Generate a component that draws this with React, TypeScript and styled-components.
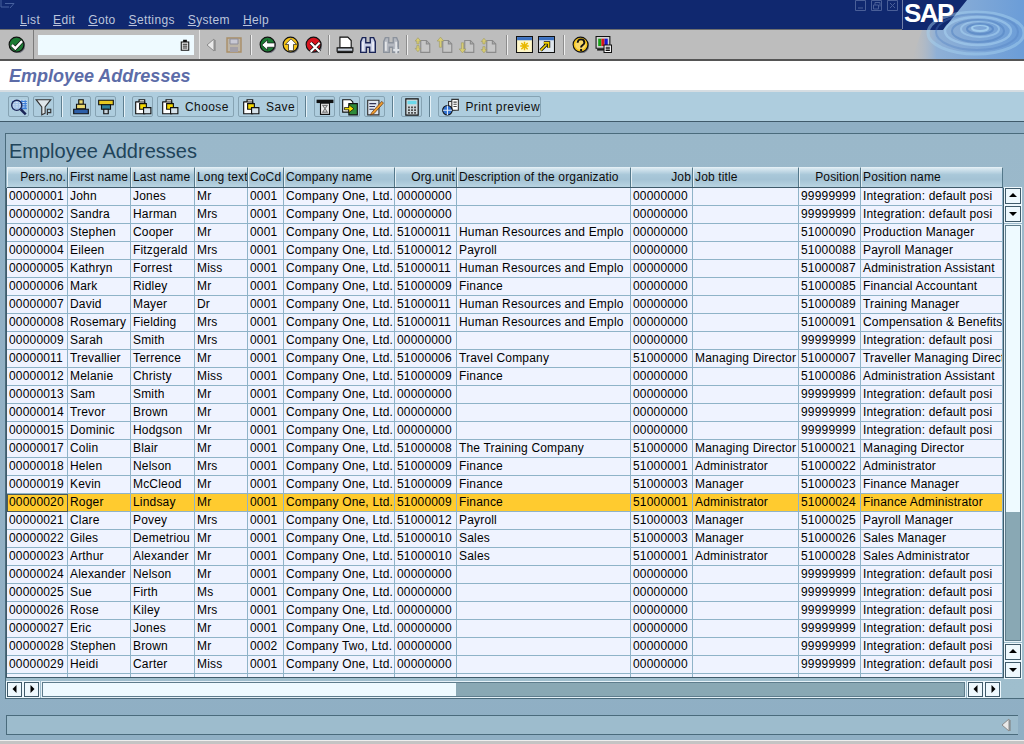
import React from "react";
import styled, { createGlobalStyle } from "styled-components";

const GlobalStyle = createGlobalStyle`
  html, body { margin: 0; padding: 0; background: #8fafc4; }
  body { font-family: "Liberation Sans", Arial, sans-serif; font-size: 12px; color: #000; }
`;

const Screen = styled.div`
  position: relative;
  width: 1024px;
  height: 744px;
  overflow: hidden;
  display: flex;
  flex-direction: column;
`;

const TitleBar = styled.div`
  position: relative;
  height: 29px;
  flex: none;
  background: #10286f;
`;

const WindowGlyph = styled.svg`
  position: absolute;
  left: 0;
  top: 0;
`;

const Menu = styled.nav`
  display: flex;
  padding: 13px 0 0 20px;
  gap: 13px;
  font-size: 12px;
  letter-spacing: 0.35px;
  line-height: 14px;
  color: #bcc5dc;
  u { text-underline-offset: 1px; }
`;

const WindowButtons = styled.div`
  position: absolute;
  left: 855px;
  top: 0;
  display: flex;
  gap: 5px;
`;

const LogoArea = styled.div`
  position: absolute;
  right: 0;
  top: 0;
  width: 122px;
  height: 59px;
  z-index: 2;
`;

const LogoRipple = styled.svg`
  position: absolute;
  inset: 0;
`;

const LogoText = styled.span`
  position: absolute;
  left: 2px;
  top: 0;
  font-size: 26px;
  line-height: 27px;
  font-weight: 700;
  letter-spacing: -1.6px;
  color: #fff;
`;

const SystemBar = styled.div`
  height: 29px;
  flex: none;
  display: flex;
  align-items: center;
  background: #bdbdbd;
  border-top: 1px solid #6f6f6f;
  border-bottom: 2px solid #555;
  box-sizing: content-box;
`;

const OkCell = styled.div`
  width: 33px;
  height: 29px;
  display: flex;
  align-items: center;
  justify-content: center;
  border-right: 1px solid #7a7a7a;
`;

const CommandCell = styled.div`
  width: 166px;
  height: 29px;
  display: flex;
  align-items: center;
  padding-left: 4px;
  box-sizing: border-box;
  border-right: 1px solid #e4e4e4;
  margin-right: 1px;
`;

const CommandField = styled.div`
  width: 156px;
  height: 20px;
  background: #eefaff;
  display: flex;
  align-items: center;
  justify-content: flex-end;
  padding-right: 3px;
  box-sizing: border-box;
`;

const Slot = styled.span<{ $w?: number }>`
  width: ${(p) => p.$w ?? 22}px;
  height: 22px;
  flex: none;
  display: flex;
  align-items: center;
  justify-content: center;
`;

const BarSep = styled.i<{ $space?: number }>`
  width: 2px;
  height: 20px;
  flex: none;
  margin: 0 ${(p) => (p.$space ?? 9) / 2}px;
  background: linear-gradient(90deg, #8d8d8d 50%, #eee 50%);
`;

const TitleArea = styled.div`
  height: 29px;
  flex: none;
  background: #fff;
  border-bottom: 2px solid #d6dde2;
  box-sizing: content-box;
  padding-left: 9px;
`;

const PageTitle = styled.h1`
  margin: 0;
  font-size: 18px;
  line-height: 30px;
  font-weight: 700;
  font-style: italic;
  color: #5c6ca8;
`;

const AppBar = styled.div`
  height: 29px;
  flex: none;
  display: flex;
  align-items: center;
  gap: 4px;
  padding-left: 8px;
  background: #aecdde;
  border-bottom: 1px solid #3f5a6a;
`;

const ToolButton = styled.div<{ $w?: number }>`
  width: ${(p) => p.$w ?? 21}px;
  height: 21px;
  flex: none;
  box-sizing: border-box;
  display: flex;
  align-items: center;
  justify-content: ${(p) => (p.$w ? "flex-start" : "center")};
  gap: 6px;
  padding: ${(p) => (p.$w ? "0 0 0 3px" : "0")};
  border: 1px solid #86a3b3;
  border-radius: 2px;
  white-space: nowrap;
  letter-spacing: 0.4px;
  color: #111;
`;

const ToolSep = styled.i`
  width: 2px;
  height: 21px;
  flex: none;
  margin: 0 3px;
  background: linear-gradient(90deg, #5f7f90 50%, #e6f2f8 50%);
`;

const Workspace = styled.div`
  flex: 1;
  display: flex;
  flex-direction: column;
  padding: 11px 0 0 5px;
  background: linear-gradient(#8fafc4, #93b1c5 60%, #8fafc4);
`;

const Panel = styled.section`
  height: 566px;
  flex: none;
  box-sizing: border-box;
  border: 1px solid #4a6b7c;
  border-right: 0;
  background: linear-gradient(#9ab8ca, #9fbecd);
`;

const PanelTitle = styled.h2`
  margin: 0;
  height: 33px;
  padding-left: 3px;
  font-size: 20px;
  line-height: 34px;
  font-weight: 400;
  color: #21445a;
`;

const TableRow = styled.div`
  display: flex;
  height: 510px;
`;

const TableWrap = styled.div`
  width: 997px;
  flex: none;
`;

const columns = "61px 63px 64px 53px 36px 111px 62px 174px 62px 106px 62px 142px";

const HeaderRow = styled.div`
  display: grid;
  grid-template-columns: ${columns};
  height: 21px;
  margin-left: 1px;
  box-sizing: border-box;
  border-bottom: 1px solid #3f5a6a;
`;

const HeadCell = styled.div<{ $right?: boolean }>`
  box-sizing: border-box;
  overflow: hidden;
  white-space: nowrap;
  height: 20px;
  padding: 0 1px;
  line-height: 19px;
  letter-spacing: 0.14px;
  text-align: ${(p) => (p.$right ? "right" : "left")};
  color: #0c0c0c;
  background: linear-gradient(#dbeaf2, #a9c8d9 35%, #a4c3d5 60%, #b9d4e2);
  border-top: 1px solid #e3eff5;
  border-left: 1px solid #e3eff5;
  border-right: 1px solid #54788a;
`;

const Body = styled.div`
  height: 489px;
  overflow: hidden;
  box-sizing: content-box;
  border-left: 1px solid #3f5a6a;
  border-right: 1px solid #3f5a6a;
  border-bottom: 1px solid #3f5a6a;
  width: 996px;
`;

const DataRow = styled.div<{ $selected?: boolean }>`
  display: grid;
  grid-template-columns: ${columns};
  height: 18px;
  background: ${(p) => (p.$selected ? "#ffcb2f" : "#eff3ff")};
`;

const Cell = styled.div<{ $focus?: boolean }>`
  box-sizing: border-box;
  overflow: hidden;
  white-space: nowrap;
  padding: 0 0 0 2px;
  line-height: 17px;
  letter-spacing: 0.18px;
  border-right: 1px solid #8fb3c8;
  border-bottom: 1px solid #8fb3c8;
  outline: ${(p) => (p.$focus ? "1px solid #4d5a5a" : "none")};
  outline-offset: -1px;
`;

const VScroll = styled.div`
  width: 16px;
  flex: none;
  margin: 21px 0 0 2px;
  display: flex;
  flex-direction: column;
  gap: 2px;
`;

const ScrollBtn = styled.div<{ $w?: number; $h?: number }>`
  width: ${(p) => p.$w ?? 16}px;
  height: ${(p) => p.$h ?? 16}px;
  flex: none;
  box-sizing: border-box;
  display: flex;
  align-items: center;
  justify-content: center;
  background: #eef8fd;
  border: 1px solid #3f5a6a;
  outline: 1px solid #eef8fd;
  outline-offset: 0;
`;

const VTrack = styled.div`
  width: 16px;
  height: 416px;
  flex: none;
  margin: 1px 0;
  box-sizing: border-box;
  border: 1px solid #5d7c8c;
  outline: 1px solid #e6f2f8;
  display: flex;
  flex-direction: column;
`;

const TrackPart = styled.div<{ $thumb?: boolean; $size?: number }>`
  ${(p) => (p.$size ? `flex: 0 0 ${p.$size}px;` : "flex: 1;")}
  background: ${(p) => (p.$thumb ? "#89a8b4" : "#eefaff")};
`;

const HScroll = styled.div`
  display: flex;
  align-items: center;
  gap: 2px;
  margin: 3px 0 0 1px;
  height: 16px;
  width: 994px;
`;

const HTrack = styled.div`
  width: 923px;
  height: 15px;
  flex: none;
  margin: 0 1px;
  box-sizing: border-box;
  border: 1px solid #5d7c8c;
  outline: 1px solid #e6f2f8;
  display: flex;
`;

const StatusBar = styled.div`
  height: 20px;
  width: 1012px;
  flex: none;
  margin: 16px 0 0 1px;
  box-sizing: border-box;
  border: 1px solid #4a6b7c;
  border-right: 0;
  background: #9dbccd;
  display: flex;
  align-items: center;
  justify-content: flex-end;
  padding-right: 3px;
`;

const BottomEdge = styled.div`
  height: 3px;
  flex: none;
  background: #c4c4c4;
  border-top: 1px solid #eee;
`;

/* ---- drawings ---- */

const Svg = ({ size = 16, children }: { size?: number; children: React.ReactNode }) => (
  <svg width={size} height={size} viewBox="0 0 16 16" aria-hidden="true">
    {children}
  </svg>
);

const Round = ({ fill, children }: { fill: string; children: React.ReactNode }) => (
  <Svg size={18}>
    <circle cx="8.6" cy="8.6" r="6.6" fill="#6c6f7a" />
    <circle cx="7.6" cy="7.6" r="6.6" fill={fill} stroke="#111" strokeWidth="1" />
    {children}
  </Svg>
);

const Check = () => (
  <Round fill="#1c7a34">
    <path d="M3.5 8 6.5 11 12.5 4.5" fill="none" stroke="#111" strokeWidth="3.4" />
    <path d="M3.5 8 6.5 11 12.5 4.5" fill="none" stroke="#fff" strokeWidth="2.2" />
  </Round>
);
const Back = () => (
  <Round fill="#1c7a34">
    <path d="M2.5 8 7.5 3.5V6.2H14V10H7.5V12.5Z" fill="#fff" stroke="#111" strokeWidth=".6" />
  </Round>
);
const Up = () => (
  <Round fill="#f6c417">
    <path d="M8 2.5 13 7.5H10.2V13H5.8V7.5H3Z" fill="#fff" stroke="#111" strokeWidth=".6" />
  </Round>
);
const Cancel = () => (
  <Round fill="#d8141f">
    <path d="M5 6 13 14M13 6 5 14" stroke="#111" strokeWidth="3.2" />
    <path d="M5 6 13 14M13 6 5 14" stroke="#fff" strokeWidth="2" />
  </Round>
);
const Help = () => (
  <Round fill="#f6c417">
    <circle cx="7.6" cy="7.6" r="4.8" fill="#fff" opacity=".35" />
    <path d="M5 6c0-4 6-4 6 0 0 2-3 2-3 4.2" fill="none" stroke="#111" strokeWidth="1.7" />
    <path d="M7.2 11.5h1.8v2H7.2z" fill="#111" />
  </Round>
);

const DocSmall = () => (
  <Svg size={12}>
    <path d="M3 4h10v11H3z" fill="#eee" stroke="#111" strokeWidth="1.4" />
    <path d="M5.5 1h5v3h-5z" fill="#111" />
    <path d="M5 7h6M5 9.5h6M5 12h6" stroke="#111" strokeWidth="1.2" />
  </Svg>
);
const BackGray = () => (
  <Svg>
    <path d="M10 2 3 8l7 6z" fill="#e9e9e9" stroke="#8b8b8b" />
    <path d="M11 3v11" stroke="#7c7c7c" />
  </Svg>
);
const SaveOff = () => (
  <Svg size={16}>
    <path d="M1 1h14v14H1z" fill="#bdb5a8" stroke="#a98e67" strokeWidth="1.4" />
    <path d="M4 2h8v5H4z" fill="#c8c8d4" stroke="#8e8e9a" />
    <path d="M4 10h8v5H4z" fill="#a4a0a8" />
  </Svg>
);
const Print = () => (
  <Svg size={18}>
    <path d="M3.5 1h7l3 3v6.5h-10z" fill="#fff" stroke="#111" />
    <path d="M1 10.5h14v3H1z" fill="#c8d0dc" stroke="#111" />
    <path d="M1 14.5h14" stroke="#111" strokeWidth="1.4" />
  </Svg>
);
const Binocular = ({ off }: { off?: boolean }) => {
  const c = off ? "#8b929c" : "#1a2456";
  const f = off ? "#b4b8c0" : "#c8cfe6";
  return (
    <Svg size={18}>
      <path d="M1.5 5 3 1.5h3V6h4V1.5h3L14.5 5v9.5h-5V10h-3v4.5h-5z" fill={f} stroke={c} strokeWidth="1.2" />
      <path d="M3.5 5v8M12.5 5v8" stroke="#fff" />
      {off && <path d="M10 12.5h5.5M12.7 10v5.5" stroke="#dfe3e8" strokeWidth="1.8" />}
    </Svg>
  );
};
const PageNav = ({ kind }: { kind: "first" | "prev" | "next" | "last" }) => (
  <Svg size={18}>
    <path d="M6 4h5l3 3v7.5H6z" fill="#c6c6c6" stroke="#8b8b8b" />
    <path d="M11 4v3h3" fill="none" stroke="#8b8b8b" />
    {kind === "first" && <path d="M3.5 1.5 6 4.5H4.5V7h-2V4.5H1zM3.5 14 1 11h1.5V8.5h2V11H6z" fill="#d8cc72" stroke="#9a9560" strokeWidth=".5" />}
    {kind === "prev" && <path d="M4 1 7 4.5H5V10H3V4.5H1z" fill="#d8cc72" stroke="#9a9560" strokeWidth=".5" />}
    {kind === "next" && <path d="M4 15 1 11.5h2V6h2v5.5h2z" fill="#d8cc72" stroke="#9a9560" strokeWidth=".5" />}
    {kind === "last" && <path d="M3.5 2 6 5H4.5v2h-2V5H1zM3.5 15 1 12h1.5V9.5h2V12H6z" fill="#d8cc72" stroke="#9a9560" strokeWidth=".5" />}
  </Svg>
);
const NewSession = () => (
  <Svg size={17}>
    <path d="M.5.5h15v15H.5z" fill="#fff7c8" stroke="#111" />
    <path d="M1 1h14v3H1z" fill="#3a6fc0" />
    <path d="M8 5.5v8M4 9.5h8M5 6.5l6 6M11 6.5l-6 6" stroke="#e8b800" strokeWidth="1.4" />
  </Svg>
);
const Shortcut = () => (
  <Svg size={17}>
    <path d="M.5.5h15v15H.5z" fill="#dfe6ec" stroke="#111" />
    <path d="M1 1h14v3H1z" fill="#3a6fc0" />
    <path d="M2.5 13.5 8 8M5.5 6.5h4.5v4.5" fill="none" stroke="#111" strokeWidth="3" />
    <path d="M2.5 13.5 8 8M5.5 6.5h4.5v4.5" fill="none" stroke="#f4d400" strokeWidth="1.5" />
  </Svg>
);
const Layout = () => (
  <Svg size={17}>
    <path d="M1 .5h13v11H1z" fill="#d6d6d6" stroke="#111" />
    <path d="M3 2.5h3v7H3z" fill="#18a018" />
    <path d="M6 2.5h3v7H6z" fill="#d81818" />
    <path d="M9 2.5h3v7H9z" fill="#1818d0" />
    <path d="M2 13h7" stroke="#111" strokeWidth="1.4" />
    <path d="M8.5 8.5h7v7h-7z" fill="#fff" stroke="#111" />
    <path d="M10 10.5h4M10 12h4M10 13.5h4" stroke="#111" />
  </Svg>
);
const Details = () => (
  <Svg size={18}>
    <path d="M2 2h13v8H2z" fill="#3d7ed8" />
    <path d="M2 2h13M2 4h13M2 6h13M2 8h13" stroke="#dce9f5" strokeDasharray="2 1" />
    <circle cx="6" cy="6.5" r="4.5" fill="#cfe0f0" fillOpacity=".7" stroke="#1a2456" strokeWidth="1.2" />
    <path d="M9.5 10 14 14.5" stroke="#1a2456" strokeWidth="2.2" />
  </Svg>
);
const Filter = () => (
  <Svg size={18}>
    <path d="M1 1.5h13L9 8v5.5l-3 1.5V8z" fill="#dfe6ea" stroke="#333" />
    <path d="M11 10h3v3h-3zM11 10v5" fill="none" stroke="#333" />
  </Svg>
);
const SortAsc = () => (
  <Svg size={18}>
    <path d="M6 1.5h4v4H6z" fill="#e8d870" stroke="#111" />
    <path d="M4 5.5h8v4H4z" fill="#e8d870" stroke="#111" />
    <path d="M1.5 10h13v4h-13z" fill="#2d5fa8" stroke="#111" />
  </Svg>
);
const SortDesc = () => (
  <Svg size={18}>
    <path d="M1.5 2h13v4h-13z" fill="#e8c820" stroke="#111" />
    <path d="M4 6h8v4H4z" fill="#2d7f9a" stroke="#111" />
    <path d="M6 10h4v4H6z" fill="#c8d4dc" stroke="#111" />
  </Svg>
);
const Choose = () => (
  <Svg size={18}>
    <path d="M1.5 3.5h3v-2h5v3h-1" fill="#fff" stroke="#111" />
    <path d="M1.5 3.5h8V14h-8z" fill="#fff" stroke="#111" />
    <path d="M5 5h6v5H5z" fill="#f4d800" stroke="#111" />
    <path d="M8.5 8.5h6.5v5.5H8.5z" fill="#d6e2ea" stroke="#111" />
  </Svg>
);
const Sum = () => (
  <Svg size={18}>
    <path d="M.5 1.5h15v3h-15z" fill="#111" />
    <path d="M4 4.5h8v10H4z" fill="#eee" stroke="#111" />
    <path d="M6 6.5h4L6 12.5h4z" fill="none" stroke="#777" />
  </Svg>
);
const Export = () => (
  <Svg size={18}>
    <path d="M1.5 1.5h7l2 2v9h-9z" fill="#fff" stroke="#111" />
    <path d="M7 5h7.5v10H7z" fill="#2e8b3a" stroke="#111" />
    <path d="M3 8.5h4V6l4.5 3.5L7 13v-2.5H3z" fill="#f4e000" stroke="#111" strokeWidth=".7" />
  </Svg>
);
const Edit = () => (
  <Svg size={18}>
    <path d="M1.5 2h10v13h-10z" fill="#dfe6f0" stroke="#333" />
    <path d="M3 5h6M3 7.5h5M3 10h4" stroke="#335" />
    <path d="M5 13 14 3l1.5 1.5L7 14l-3 1z" fill="#f2a030" stroke="#6b3a10" strokeWidth=".7" />
  </Svg>
);
const Calculator = () => (
  <Svg size={18}>
    <path d="M2.5 .8h11v14.4h-11z" fill="#cfd8dc" stroke="#111" />
    <path d="M4 2.5h8v3H4z" fill="#6cd8ea" />
    <path d="M4.5 7.5h1.6v1.6H4.5zM7.2 7.5h1.6v1.6H7.2zM9.9 7.5h1.6v1.6H9.9zM4.5 10h1.6v1.6H4.5zM7.2 10h1.6v1.6H7.2zM9.9 10h1.6v1.6H9.9zM4.5 12.5h1.6v1.6H4.5zM7.2 12.5h1.6v1.6H7.2zM9.9 12.5h1.6v1.6H9.9z" fill="#444" />
  </Svg>
);
const Preview = () => (
  <Svg size={18}>
    <path d="M6 3h6v8H6z" fill="#eee" stroke="#333" />
    <path d="M9 1h6v10H9z" fill="#fff" stroke="#333" />
    <path d="M10.5 3.5h3M10.5 5.5h3M10.5 7.5h3" stroke="#444" />
    <circle cx="5" cy="11" r="4.4" fill="#2f6fd0" stroke="#111" />
    <path d="M5 6.6v8.8M.8 11h8.4" stroke="#dce9f5" />
  </Svg>
);
const Arrow = ({ dir }: { dir: "up" | "down" | "left" | "right" }) => {
  const d = {
    up: "M1 6 5 2l4 4z",
    down: "M1 3h8L5 7z",
    left: "M6.5 1v8L2.5 5z",
    right: "M3.5 1v8l4-4z",
  }[dir];
  return (
    <svg width="10" height="10" viewBox="0 0 10 10" aria-hidden="true">
      <path d={d} fill="#000" />
    </svg>
  );
};

const SapRipple = () => (
  <LogoRipple width="122" height="59" viewBox="0 0 122 59">
    <defs>
      <linearGradient id="fade" x1="0" x2="1" y1="0" y2="0">
        <stop offset="0" stopColor="#b5bcc6" stopOpacity="0" />
        <stop offset=".22" stopColor="#8fb0d6" />
        <stop offset="1" stopColor="#6b9dd8" />
      </linearGradient>
    </defs>
    <path d="M0 0h65L41 30H0z" fill="#10286f" />
    <path d="M0 0v29" stroke="#cfd6e2" />
    <path d="M65 0h57v59H10L20 30h21z" fill="url(#fade)" />
    <g fill="none" stroke="#a9d4f2">
      <ellipse cx="78" cy="28" rx="8" ry="3" strokeWidth="2" opacity=".8" />
      <ellipse cx="78" cy="29" rx="19" ry="8" strokeWidth="2" opacity=".55" />
      <ellipse cx="76" cy="31" rx="33" ry="14" strokeWidth="2.5" opacity=".55" />
      <ellipse cx="74" cy="33" rx="48" ry="21" strokeWidth="3" opacity=".45" />
    </g>
    <g fill="none" stroke="#4f7fbf">
      <ellipse cx="78" cy="29" rx="13" ry="5" strokeWidth="2" opacity=".6" />
      <ellipse cx="76" cy="31" rx="26" ry="11" strokeWidth="2" opacity=".5" />
      <ellipse cx="75" cy="32" rx="41" ry="18" strokeWidth="2" opacity=".35" />
    </g>
  </LogoRipple>
);

const WindowBox = ({ children }: { children: React.ReactNode }) => (
  <svg width="11" height="11" viewBox="0 0 11 11" fill="none" stroke="#4a5f98" aria-hidden="true">
    <path d="M.5.5h10v10H.5z" />
    {children}
  </svg>
);

/* ---- data ---- */

const one = "Company One, Ltd.";
const empty = "00000000";
const integ = "Integration: default posi";
const hr = "Human Resources and Emplo";

const headers: [string, boolean][] = [
  ["Pers.no.", true],
  ["First name", false],
  ["Last name", false],
  ["Long text", false],
  ["CoCd", false],
  ["Company name", false],
  ["Org.unit", true],
  ["Description of the organizatio", false],
  ["Job", true],
  ["Job title", false],
  ["Position", true],
  ["Position name", false],
];

const row = (
  no: string,
  first: string,
  last: string,
  title: string,
  org = empty,
  desc = "",
  job = empty,
  jobTitle = "",
  pos = "99999999",
  posName = integ,
  code = "0001",
  company = one,
) => ["000000" + no, first, last, title, code, company, org, desc, job, jobTitle, pos, posName];

const m1 = "51000001";
const m3 = "51000003";

const rows = [
  row("01", "John", "Jones", "Mr"),
  row("02", "Sandra", "Harman", "Mrs"),
  row("03", "Stephen", "Cooper", "Mr", "51000011", hr, empty, "", "51000090", "Production Manager"),
  row("04", "Eileen", "Fitzgerald", "Mrs", "51000012", "Payroll", empty, "", "51000088", "Payroll Manager"),
  row("05", "Kathryn", "Forrest", "Miss", "51000011", hr, empty, "", "51000087", "Administration Assistant"),
  row("06", "Mark", "Ridley", "Mr", "51000009", "Finance", empty, "", "51000085", "Financial Accountant"),
  row("07", "David", "Mayer", "Dr", "51000011", hr, empty, "", "51000089", "Training Manager"),
  row("08", "Rosemary", "Fielding", "Mrs", "51000011", hr, empty, "", "51000091", "Compensation & Benefits"),
  row("09", "Sarah", "Smith", "Mrs"),
  row("11", "Trevallier", "Terrence", "Mr", "51000006", "Travel Company", "51000000", "Managing Director", "51000007", "Traveller Managing Direct"),
  row("12", "Melanie", "Christy", "Miss", "51000009", "Finance", empty, "", "51000086", "Administration Assistant"),
  row("13", "Sam", "Smith", "Mr"),
  row("14", "Trevor", "Brown", "Mr"),
  row("15", "Dominic", "Hodgson", "Mr"),
  row("17", "Colin", "Blair", "Mr", "51000008", "The Training Company", "51000000", "Managing Director", "51000021", "Managing Director"),
  row("18", "Helen", "Nelson", "Mrs", "51000009", "Finance", m1, "Administrator", "51000022", "Administrator"),
  row("19", "Kevin", "McCleod", "Mr", "51000009", "Finance", m3, "Manager", "51000023", "Finance Manager"),
  row("20", "Roger", "Lindsay", "Mr", "51000009", "Finance", m1, "Administrator", "51000024", "Finance Administrator"),
  row("21", "Clare", "Povey", "Mrs", "51000012", "Payroll", m3, "Manager", "51000025", "Payroll Manager"),
  row("22", "Giles", "Demetriou", "Mr", "51000010", "Sales", m3, "Manager", "51000026", "Sales Manager"),
  row("23", "Arthur", "Alexander", "Mr", "51000010", "Sales", m1, "Administrator", "51000028", "Sales Administrator"),
  row("24", "Alexander", "Nelson", "Mr"),
  row("25", "Sue", "Firth", "Ms"),
  row("26", "Rose", "Kiley", "Mrs"),
  row("27", "Eric", "Jones", "Mr"),
  row("28", "Stephen", "Brown", "Mr", empty, "", empty, "", "99999999", integ, "0002", "Company Two, Ltd."),
  row("29", "Heidi", "Carter", "Miss"),
  Array(12).fill(""),
];

const menuItems: [string, string][] = [
  ["L", "ist"],
  ["E", "dit"],
  ["G", "oto"],
  ["S", "ettings"],
  ["S", "ystem"],
  ["H", "elp"],
];

export default function App() {
  return (
    <Screen>
      <GlobalStyle />
      <TitleBar>
        <WindowGlyph width="16" height="10" viewBox="0 0 16 10" fill="none" stroke="#47619f" aria-hidden="true">
          <path d="M1 0v7h8M1 0M5 3.5h9L10 8" />
        </WindowGlyph>
        <Menu>
          {menuItems.map(([first, rest]) => (
            <span key={first + rest}>
              <u>{first}</u>
              {rest}
            </span>
          ))}
        </Menu>
        <WindowButtons>
          <WindowBox>
            <path d="M3 8h5" />
          </WindowBox>
          <WindowBox>
            <path d="M2.5 5h5v4h-5zM4 5V2.5h5v4" />
          </WindowBox>
          <WindowBox>
            <path d="M3 3l5 5M8 3 3 8" />
          </WindowBox>
        </WindowButtons>
      </TitleBar>
      <LogoArea>
        <SapRipple />
        <LogoText>SAP</LogoText>
      </LogoArea>

      <SystemBar>
        <OkCell>
          <Check />
        </OkCell>
        <CommandCell>
          <CommandField>
            <DocSmall />
          </CommandField>
        </CommandCell>
        <Slot><BackGray /></Slot>
        <Slot><SaveOff /></Slot>
        <BarSep />
        <Slot $w={23}><Back /></Slot>
        <Slot $w={23}><Up /></Slot>
        <Slot $w={23}><Cancel /></Slot>
        <BarSep $space={6} />
        <Slot $w={23}><Print /></Slot>
        <Slot $w={23}><Binocular /></Slot>
        <Slot $w={23}><Binocular off /></Slot>
        <BarSep $space={8} />
        <Slot><PageNav kind="first" /></Slot>
        <Slot><PageNav kind="prev" /></Slot>
        <Slot><PageNav kind="next" /></Slot>
        <Slot><PageNav kind="last" /></Slot>
        <BarSep $space={11} />
        <Slot><NewSession /></Slot>
        <Slot><Shortcut /></Slot>
        <BarSep $space={11} />
        <Slot><Help /></Slot>
        <Slot><Layout /></Slot>
      </SystemBar>

      <TitleArea>
        <PageTitle>Employee Addresses</PageTitle>
      </TitleArea>

      <AppBar>
        <ToolButton><Details /></ToolButton>
        <ToolButton><Filter /></ToolButton>
        <ToolSep />
        <ToolButton><SortAsc /></ToolButton>
        <ToolButton><SortDesc /></ToolButton>
        <ToolSep />
        <ToolButton><Choose /></ToolButton>
        <ToolButton $w={77}><Choose />Choose</ToolButton>
        <ToolButton $w={60}><Choose />Save</ToolButton>
        <ToolSep />
        <ToolButton><Sum /></ToolButton>
        <ToolButton><Export /></ToolButton>
        <ToolButton><Edit /></ToolButton>
        <ToolSep />
        <ToolButton><Calculator /></ToolButton>
        <ToolSep />
        <ToolButton $w={103}><Preview />Print preview</ToolButton>
      </AppBar>

      <Workspace>
        <Panel>
          <PanelTitle>Employee Addresses</PanelTitle>
          <TableRow>
            <TableWrap>
              <HeaderRow>
                {headers.map(([label, right]) => (
                  <HeadCell key={label} $right={right}>{label}</HeadCell>
                ))}
              </HeaderRow>
              <Body>
                {rows.map((cells, r) => {
                  const selected = cells[0] === "00000020";
                  return (
                    <DataRow key={r} $selected={selected}>
                      {cells.map((text, c) => (
                        <Cell key={c} $focus={selected && c === 0}>{text}</Cell>
                      ))}
                    </DataRow>
                  );
                })}
              </Body>
              <HScroll>
                <ScrollBtn $w={15} $h={15}><Arrow dir="left" /></ScrollBtn>
                <ScrollBtn $w={15} $h={15}><Arrow dir="right" /></ScrollBtn>
                <HTrack>
                  <TrackPart $size={413} />
                  <TrackPart $thumb />
                </HTrack>
                <ScrollBtn $w={15} $h={15}><Arrow dir="left" /></ScrollBtn>
                <ScrollBtn $w={15} $h={15}><Arrow dir="right" /></ScrollBtn>
              </HScroll>
            </TableWrap>
            <VScroll>
              <ScrollBtn><Arrow dir="up" /></ScrollBtn>
              <ScrollBtn><Arrow dir="down" /></ScrollBtn>
              <VTrack>
                <TrackPart $size={286} />
                <TrackPart $thumb />
              </VTrack>
              <ScrollBtn><Arrow dir="up" /></ScrollBtn>
              <ScrollBtn><Arrow dir="down" /></ScrollBtn>
            </VScroll>
          </TableRow>
        </Panel>
        <StatusBar>
          <BackGray />
        </StatusBar>
      </Workspace>
      <BottomEdge />
    </Screen>
  );
}
